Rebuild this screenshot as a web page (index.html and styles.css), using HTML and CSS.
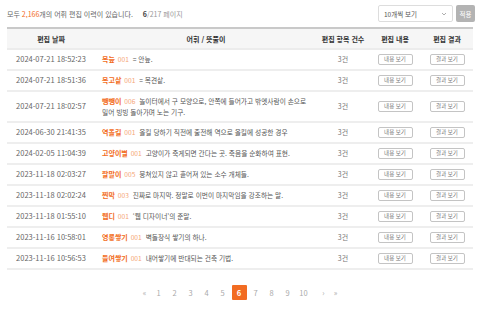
FILE: index.html
```html
<!DOCTYPE html>
<html lang="ko">
<head>
    <meta charset="UTF-8">
    <title>어휘 편집 이력</title>
    <link rel="stylesheet" href="styles.css">
</head>
<body>
    <div class="container">
        <div class="top-bar">
            <p class="summary">모두 <span class="accent">2,166</span>개의 어휘 편집 이력이 있습니다. <span class="page-info"><b>6</b>/217 페이지</span></p>
            <div class="controls">
                <div class="select">
                    <span>10개씩 보기</span>
                    <svg width="6" height="4" viewBox="0 0 6 4"><path d="M1 1 L3 3 L5 1" fill="none" stroke="#999" stroke-width="0.8"/></svg>
                </div>
                <button class="apply">적용</button>
            </div>
        </div>

        <table class="history">
            <thead>
                <tr>
                    <th class="col-date">편집 날짜</th>
                    <th class="col-word">어휘 / 뜻풀이</th>
                    <th class="col-count">편집 항목 건수</th>
                    <th class="col-btn">편집 내용</th>
                    <th class="col-btn">편집 결과</th>
                </tr>
            </thead>
            <tbody>
                <tr>
                    <td class="date">2024-07-21 18:52:23</td>
                    <td class="word"><b>목늪</b> <span class="num">001</span> = 안늪.</td>
                    <td class="count">3건</td>
                    <td><button class="view">내용 보기</button></td>
                    <td><button class="view">결과 보기</button></td>
                </tr>
                <tr>
                    <td class="date">2024-07-21 18:51:36</td>
                    <td class="word"><b>목고샅</b> <span class="num">001</span> = 목견샅.</td>
                    <td class="count">3건</td>
                    <td><button class="view">내용 보기</button></td>
                    <td><button class="view">결과 보기</button></td>
                </tr>
                <tr>
                    <td class="date">2024-07-21 18:02:57</td>
                    <td class="word"><b>뺑뺑이</b> <span class="num">006</span> 놀이터에서 구 모양으로, 안쪽에 들어가고 밖엣사람이 손으로 밀어 빙빙 돌아가며 노는 기구.</td>
                    <td class="count">3건</td>
                    <td><button class="view">내용 보기</button></td>
                    <td><button class="view">결과 보기</button></td>
                </tr>
                <tr>
                    <td class="date">2024-06-30 21:41:35</td>
                    <td class="word"><b>역올킬</b> <span class="num">001</span> 올킬 당하기 직전에 출전해 역으로 올킬에 성공한 경우</td>
                    <td class="count">3건</td>
                    <td><button class="view">내용 보기</button></td>
                    <td><button class="view">결과 보기</button></td>
                </tr>
                <tr>
                    <td class="date">2024-02-05 11:04:39</td>
                    <td class="word"><b>고양이별</b> <span class="num">001</span> 고양이가 죽게되면 간다는 곳. 죽음을 순화하여 표현.</td>
                    <td class="count">3건</td>
                    <td><button class="view">내용 보기</button></td>
                    <td><button class="view">결과 보기</button></td>
                </tr>
                <tr>
                    <td class="date">2023-11-18 02:03:27</td>
                    <td class="word"><b>팔말이</b> <span class="num">005</span> 뭉쳐있지 않고 흩어져 있는 소수 개체들.</td>
                    <td class="count">3건</td>
                    <td><button class="view">내용 보기</button></td>
                    <td><button class="view">결과 보기</button></td>
                </tr>
                <tr>
                    <td class="date">2023-11-18 02:02:24</td>
                    <td class="word"><b>찐막</b> <span class="num">003</span> 진짜로 마지막. 정말로 이번이 마지막임을 강조하는 말.</td>
                    <td class="count">3건</td>
                    <td><button class="view">내용 보기</button></td>
                    <td><button class="view">결과 보기</button></td>
                </tr>
                <tr>
                    <td class="date">2023-11-18 01:55:10</td>
                    <td class="word"><b>웹디</b> <span class="num">001</span> ‘웹 디자이너’의 준말.</td>
                    <td class="count">3건</td>
                    <td><button class="view">내용 보기</button></td>
                    <td><button class="view">결과 보기</button></td>
                </tr>
                <tr>
                    <td class="date">2023-11-16 10:58:01</td>
                    <td class="word"><b>영롱쌓기</b> <span class="num">001</span> 벽돌장식 쌓기의 하나.</td>
                    <td class="count">3건</td>
                    <td><button class="view">내용 보기</button></td>
                    <td><button class="view">결과 보기</button></td>
                </tr>
                <tr>
                    <td class="date">2023-11-16 10:56:53</td>
                    <td class="word"><b>들여쌓기</b> <span class="num">001</span> 내어쌓기에 반대되는 건축 기법.</td>
                    <td class="count">3건</td>
                    <td><button class="view">내용 보기</button></td>
                    <td><button class="view">결과 보기</button></td>
                </tr>
            </tbody>
        </table>

        <nav class="pagination">
            <a class="arrow">«</a>
            <a>1</a>
            <a>2</a>
            <a>3</a>
            <a>4</a>
            <a>5</a>
            <a class="current">6</a>
            <a>7</a>
            <a>8</a>
            <a>9</a>
            <a>10</a>
            <a class="arrow next">›</a>
            <a class="arrow">»</a>
        </nav>
    </div>
</body>
</html>
```

FILE: styles.css
```css
body {
    margin: 0;
    padding: 0;
    background: #fff;
    font-family: "Noto Sans CJK KR", "Noto Sans", sans-serif;
    font-size: 7px;
    color: #555;
}

.container {
    padding: 0 7px;
}

.top-bar {
    display: flex;
    align-items: center;
    justify-content: space-between;
    height: 27px;
}

.summary {
    margin: 0;
    color: #666;
}

.accent {
    color: #f26c22;
}

.page-info {
    margin-left: 8px;
    color: #999;
}

.page-info b {
    color: #444;
}

.controls {
    display: flex;
    align-items: center;
    gap: 3px;
    margin-right: -2px;
}

.select {
    display: flex;
    align-items: center;
    justify-content: space-between;
    width: 75px;
    height: 17px;
    box-sizing: border-box;
    padding: 0 5px;
    border: 1px solid #ddd;
    border-radius: 2px;
    font-size: 6.5px;
    color: #555;
}

.apply {
    width: 19px;
    height: 17px;
    padding: 0;
    border: none;
    border-radius: 2px;
    background: #b3b3b3;
    color: #fff;
    font-family: inherit;
    font-size: 6.5px;
}

.history {
    width: 100%;
    border-collapse: collapse;
}

.history th {
    height: 19px;
    padding: 0;
    background: #f6f6f6;
    border-top: 2px solid #c9c9c9;
    border-bottom: 2px solid #ececec;
    font-weight: bold;
    color: #333;
    text-align: center;
}

.col-date { width: 88px; }
.col-count { width: 52px; }
.col-btn { width: 52px; }

.history td {
    padding: 4px 0;
    line-height: 10.5px;
    border-bottom: 2px solid #eeeeee;
    text-align: center;
    vertical-align: middle;
}

.history td.date {
    font-size: 7.5px;
    color: #666;
}

.history td.word {
    text-align: left;
    padding-left: 7px;
    padding-right: 6px;
    font-size: 6.7px;
    word-break: keep-all;
}

.word b {
    font-size: 7px;
    color: #f26c22;
}

.word .num {
    color: #f5a677;
    margin: 0 2px 0 1px;
}

.count {
    color: #777;
}

.view {
    display: block;
    margin: 0 auto;
    width: 35px;
    height: 11px;
    padding: 0;
    background: #fff;
    border: 1px solid #c4c4c4;
    border-radius: 2px;
    font-family: inherit;
    font-size: 5.5px;
    color: #777;
    line-height: 9px;
}

.pagination {
    display: flex;
    justify-content: center;
    align-items: center;
    margin-top: 15px;
    font-size: 7.5px;
}

.pagination a {
    width: 16px;
    height: 15px;
    line-height: 15px;
    text-align: center;
    color: #aaa;
}

.pagination .arrow {
    width: 12px;
}

.pagination .next {
    margin-left: 6px;
}

.pagination .current {
    width: 15px;
    margin: 0 1px;
    background: #f26c22;
    color: #fff;
    font-weight: bold;
    border-radius: 1px;
}
```
